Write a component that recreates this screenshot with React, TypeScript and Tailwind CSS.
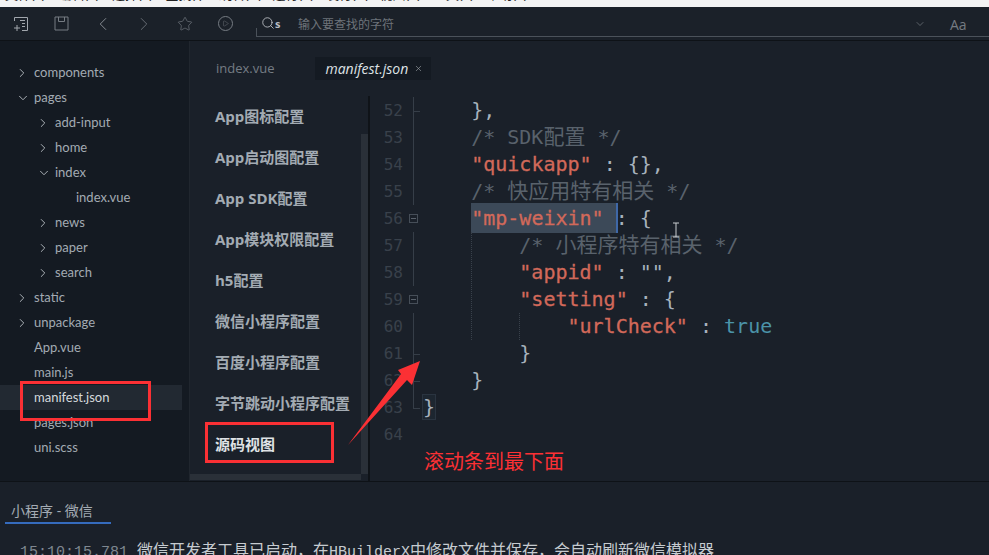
// HBuilderX manifest.json source view, with the tutorial's red annotations on top
import React from 'react';
import { ChevronDown, ChevronLeft, ChevronRight, Play, Search, Star, X } from 'lucide-react';

const uiFont = { fontFamily: '"Open Sans", "Noto Sans CJK SC", sans-serif' };
const treeFont = { fontFamily: 'Lato, "Noto Sans CJK SC", sans-serif' };
const monoFont = { fontFamily: '"DejaVu Sans Mono", "Noto Sans CJK SC", monospace' };

const menus = ['文件(F)', '编辑(E)', '选择(S)', '查找(I)', '跳转(G)', '运行(R)', '发行(U)', '视图(V)', '工具(T)', '帮助(Y)'];

type TreeItem = { name: string; depth: number; arrow?: 'open' | 'closed'; active?: boolean };

const tree: TreeItem[] = [
  { name: 'components', depth: 0, arrow: 'closed' },
  { name: 'pages', depth: 0, arrow: 'open' },
  { name: 'add-input', depth: 1, arrow: 'closed' },
  { name: 'home', depth: 1, arrow: 'closed' },
  { name: 'index', depth: 1, arrow: 'open' },
  { name: 'index.vue', depth: 2 },
  { name: 'news', depth: 1, arrow: 'closed' },
  { name: 'paper', depth: 1, arrow: 'closed' },
  { name: 'search', depth: 1, arrow: 'closed' },
  { name: 'static', depth: 0, arrow: 'closed' },
  { name: 'unpackage', depth: 0, arrow: 'closed' },
  { name: 'App.vue', depth: 0 },
  { name: 'main.js', depth: 0 },
  { name: 'manifest.json', depth: 0, active: true },
  { name: 'pages.json', depth: 0 },
  { name: 'uni.scss', depth: 0 },
];

const configItems = ['App图标配置', 'App启动图配置', 'App SDK配置', 'App模块权限配置', 'h5配置', '微信小程序配置', '百度小程序配置', '字节跳动小程序配置', '源码视图'];

type Fold = 'line' | 'tick' | 'end' | 'box' | 'none';

const Key = ({ children }: { children: React.ReactNode }) => <span className="text-[#d2695a] [-webkit-text-stroke:0.3px_#d2695a]">{children}</span>;
const Note = ({ children }: { children: React.ReactNode }) => <span className="text-[#59626c]">{children}</span>;
const Han = ({ children }: { children: React.ReactNode }) => <span className="text-[21px]">{children}</span>;

const codeLines: { no: number; fold: Fold; code: React.ReactNode }[] = [
  { no: 52, fold: 'tick', code: '    },' },
  { no: 53, fold: 'line', code: <Note>{'    /* SDK'}<Han>配置</Han>{' */'}</Note> },
  { no: 54, fold: 'line', code: <>{'    '}<Key>"quickapp"</Key>{' : {},'}</> },
  { no: 55, fold: 'line', code: <Note>{'    /* '}<Han>快应用特有相关</Han>{' */'}</Note> },
  {
    no: 56,
    fold: 'box',
    code: (
      <>
        {'    '}
        <span className="bg-[#3c4958] border-r-2 -mr-[2px] border-[#3f68a8] py-[3px]"><Key>"mp-weixin"</Key> </span>
        {': {'}
      </>
    ),
  },
  { no: 57, fold: 'line', code: <Note>{'        /* '}<Han>小程序特有相关</Han>{' */'}</Note> },
  { no: 58, fold: 'line', code: <>{'        '}<Key>"appid"</Key>{' : "",'}</> },
  { no: 59, fold: 'box', code: <>{'        '}<Key>"setting"</Key>{' : {'}</> },
  { no: 60, fold: 'line', code: <>{'            '}<Key>"urlCheck"</Key>{' : '}<span className="text-[#4b93a8]">true</span></> },
  { no: 61, fold: 'tick', code: '        }' },
  { no: 62, fold: 'tick', code: '    }' },
  { no: 63, fold: 'end', code: <span className="bg-[#1d2630] outline outline-1 outline-[#2a3440]">{'}'}</span> },
  { no: 64, fold: 'none', code: '' },
];

const FoldMark = ({ kind }: { kind: Fold }) => {
  if (kind === 'none') return <div className="w-[20px]" />;
  if (kind === 'box') {
    return (
      <div className="w-[20px] h-full flex items-center pl-[6px]">
        <div className="w-[9px] h-[9px] border border-[#464e58] flex items-center justify-center">
          <div className="w-[5px] h-px bg-[#5a626c]" />
        </div>
      </div>
    );
  }
  return (
    <div className="w-[20px] h-full flex flex-col pl-[10px]">
      <div className={`border-l border-[#363e48] ${kind === 'line' ? 'h-full' : 'h-1/2'}`} />
      {kind !== 'line' && (
        <div className={`border-t border-[#363e48] w-[7px] ${kind === 'tick' ? 'flex-1 border-l' : ''}`} />
      )}
    </div>
  );
};

const NewFileIcon = () => (
  <svg width="16" height="16" viewBox="0 0 16 16" fill="none" stroke="#a2a7ad" strokeWidth="1">
    <path d="M1.5 5V1.5h13v13H9" />
    <path d="M7 4.5h5M9 7.5h3M9 10.5h3" />
    <path d="M4 9v6M1 12h6" />
  </svg>
);

const SaveIcon = () => (
  <svg width="15" height="15" viewBox="0 0 15 15" fill="none" stroke="#767c83" strokeWidth="1">
    <path d="M1 1h13v13H1z" />
    <path d="M4.5 1v4.5h6V1" />
  </svg>
);

export default function App() {
  return (
    <div className="w-[989px] h-[555px] overflow-hidden flex flex-col bg-[#1a2029] text-[#a3abb3]" style={uiFont}>
      {/* Clipped menu bar */}
      <div className="h-[7px] shrink-0 overflow-hidden bg-[#f3f3f3]">
        <div className="flex -mt-[15px] pl-[5px] text-[13px] leading-[18px] text-[#222]">
          {menus.map((m) => (
            <span key={m} className="w-[53.5px] shrink-0">{m}</span>
          ))}
        </div>
      </div>

      {/* Toolbar */}
      <div className="h-[34px] shrink-0 flex items-start pt-[9px] bg-[#1b2129] border-b border-[#0e1217]">
        {[
          <NewFileIcon key="new" />,
          <SaveIcon key="save" />,
          <ChevronLeft key="back" size={22} strokeWidth={1} color="#8d9399" className="-mt-[3px]" />,
          <ChevronRight key="forward" size={22} strokeWidth={1} color="#6b7178" className="-mt-[3px]" />,
          <Star key="star" size={16} strokeWidth={1} color="#767c83" />,
          <div key="run" className="w-[15px] h-[15px] rounded-full border border-[#767c83] flex items-center justify-center">
            <Play size={7} strokeWidth={1.2} color="#8d9399" />
          </div>,
        ].map((icon, i) => (
          <div key={i} className="w-[41px] h-[16px] flex justify-center">{icon}</div>
        ))}
        <div className="flex-1 h-[22px] -mt-[1px] flex items-center border-b border-[#4b525a] ml-[10px] relative">
          <div className="absolute left-0 bottom-0 h-[8px] border-l border-[#4b525a]" />
          <div className="flex items-center pl-[5px] w-[42px] -mt-[5px]">
            <Search size={14} strokeWidth={1.4} color="#c6cacf" />
            <span className="text-[11px] font-bold text-[#b8bdc2] mt-[3px]">s</span>
          </div>
          <span className="text-[12px] text-[#6d737a] -mt-[2px]">输入要查找的字符</span>
          <div className="ml-auto flex items-center -mt-[3px]">
            <ChevronDown size={12} strokeWidth={1} color="#9aa0a6" />
            <span className="ml-[24px] w-[39px] text-[14px] text-[#757b82]">Aa</span>
          </div>
        </div>
      </div>

      {/* Main area */}
      <div className="h-[441px] shrink-0 flex border-b border-[#0e1217]">
        {/* Project tree */}
        <div className="w-[190px] shrink-0 pt-[19px] bg-[#141a22] border-r border-[#20262e] text-[13px]" style={treeFont}>
          {tree.map((item) => (
            <div
              key={item.name + item.depth}
              className={`h-[25px] flex items-center mr-[7px] ${item.active ? 'bg-[#222932] text-[#d5d9dd]' : ''}`}
            >
              <div className={`flex items-center ${item.depth === 0 ? 'pl-[34px]' : item.depth === 1 ? 'pl-[55px]' : 'pl-[76px]'} relative`}>
                {item.arrow === 'closed' && <ChevronRight size={14} strokeWidth={1.6} color="#b4babf" className="absolute left-[15px]" style={{ marginLeft: item.depth * 21 }} />}
                {item.arrow === 'open' && <ChevronDown size={14} strokeWidth={1.6} color="#b4babf" className="absolute left-[16px]" style={{ marginLeft: item.depth * 21 }} />}
                <span>{item.name}</span>
              </div>
            </div>
          ))}
        </div>

        {/* Editor column */}
        <div className="flex-1 flex flex-col min-w-0">
          {/* Tabs */}
          <div className="h-[55px] shrink-0 flex items-start pt-[16px]">
            <span className="ml-[26px] text-[13px] leading-[23px] text-[#757c84]">index.vue</span>
            <div className="ml-[40px] w-[116px] h-[23px] bg-[#141a22] flex items-center pl-[11px] gap-[6px]">
              <span className="italic text-[14px] text-[#dfe2e5]">manifest.json</span>
              <X size={9} strokeWidth={1.5} color="#a9aeb3" />
            </div>
          </div>

          <div className="flex-1 flex min-h-0">
            {/* manifest config list */}
            <div className="w-[180px] shrink-0 flex flex-col border-r-2 border-[#0f1318]">
              <div className="flex-1 flex min-h-0">
                <div className="flex-1 text-[15px] font-bold text-[#a3abb3]">
                  {configItems.map((c, i) => (
                    <div key={c} className={`h-[41px] flex items-center pl-[25px] whitespace-nowrap ${i === 8 ? 'text-[#dfe2e5]' : ''}`}>{c}</div>
                  ))}
                </div>
                <div className="w-[7px] shrink-0 pt-[38px]">
                  <div className="h-full bg-[#2a3038]" />
                </div>
              </div>
              <div className="h-[6px] shrink-0 mb-[1px] mr-[7px] bg-[#2a3038]" />
            </div>

            {/* Code */}
            <div className="relative flex-1 min-w-0 text-[20px]" style={monoFont}>
              <div className="pt-[1px]">
                {codeLines.map((l) => (
                  <div key={l.no} className="h-[27px] flex items-center text-[#a7b2bd] leading-[27px]">
                    <span className="w-[33px] text-right text-[16px] text-[#39414b]">{l.no}</span>
                    <FoldMark kind={l.fold} />
                    <span className="whitespace-pre">{l.code}</span>
                  </div>
                ))}
              </div>
              {/* Indent guides */}
              <div className="absolute left-[101px] top-[136px] h-[108px] border-l border-dotted border-[#39414b]" />
              <div className="absolute left-[149px] top-[217px] h-[27px] border-l border-dotted border-[#39414b]" />
              {/* Mouse text cursor */}
              <svg className="absolute left-[301px] top-[126px]" width="10" height="16" viewBox="0 0 10 16" fill="none" stroke="#c8ccd0" strokeWidth="1">
                <path d="M2 1h6M5 1v14M2 15h6" />
              </svg>
            </div>
          </div>
        </div>
      </div>

      {/* Console panel */}
      <div className="flex-1 min-h-0 overflow-hidden pl-[5px] pt-[19px]">
        <div className="w-[106px] h-[23px] border-b-2 border-[#356bbd] pl-[6px] text-[14px] leading-[19px] text-[#a3abb3]">小程序 - 微信</div>
        <div className="mt-[18px] pl-[15px] whitespace-pre text-[15px] leading-[20px] text-[#c6cbd0]" style={{ fontFamily: '"Liberation Mono", "Noto Sans CJK SC", monospace' }}>
          <span className="text-[#7f8790]">15:10:15.781</span> <span className="text-[16px]">微信开发者工具已启动，在</span>HBuilderX<span className="text-[16px]">中修改文件并保存，会自动刷新微信模拟器</span>
        </div>
      </div>

      {/* Annotations */}
      <div className="absolute left-[20px] top-[381px] w-[131px] h-[40px] border-[3px] border-[#fb3034]" />
      <div className="absolute left-[205px] top-[422px] w-[129px] h-[41px] border-[3px] border-[#fb3034]" />
      <svg className="absolute left-[340px] top-[355px]" width="90" height="95" viewBox="0 0 90 95">
        <path d="M8 90 L61 19 L58 15 L80 6 L72 30 L67 25 Z" fill="#fb3034" />
      </svg>
      <div className="absolute left-[424px] top-[447px] text-[20px] leading-[27px] text-[#fb3034] whitespace-nowrap" style={{ fontFamily: '"Noto Sans CJK SC", sans-serif' }}>
        滚动条到最下面
      </div>
    </div>
  );
}
